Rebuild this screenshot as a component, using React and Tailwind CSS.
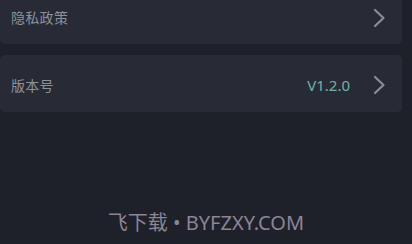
import React from "react";

function Chevron() {
  return (
    <svg width="14" height="20" viewBox="0 0 14 20" fill="none" className="shrink-0">
      <path d="M3 2 L11.5 10 L3 18" stroke="#8a8d96" strokeWidth="2.2" strokeLinecap="round" strokeLinejoin="round" />
    </svg>
  );
}

export default function App() {
  return (
    <div
      className="w-[412px] h-[244px] overflow-hidden bg-[#1e2129] flex flex-col"
      style={{ fontFamily: '"Noto Sans", "Noto Sans CJK SC", sans-serif' }}
    >
      <div className="-mt-[12px] mr-[10px] h-[56px] rounded-[5px] bg-[#282b36] flex items-center pl-[11px] pr-[16px] pt-[3px]">
        <span className="text-[14px] text-[#8d909a] flex-1 tracking-[0.3px]">隐私政策</span>
        <Chevron />
      </div>
      <div className="mt-[11px] mr-[10px] h-[57px] rounded-[5px] bg-[#282b36] flex items-center pl-[11px] pr-[16px] pt-[3px]">
        <span className="text-[14px] text-[#8d909a] flex-1 tracking-[0.3px]">版本号</span>
        <span className="text-[15px] text-[#6fb3a6] mr-[22px]">V1.2.0</span>
        <Chevron />
      </div>
      <div className="flex-1 flex items-end justify-center pb-[11px]">
        <span className="text-[20px] text-[#8d8496] leading-none">飞下载 • BYFZXY.COM</span>
      </div>
    </div>
  );
}
